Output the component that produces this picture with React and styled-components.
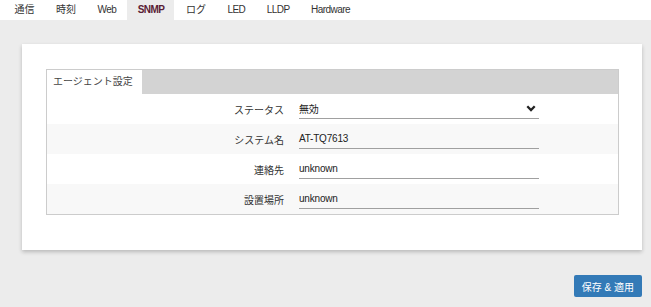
import React from "react";
import styled, { createGlobalStyle } from "styled-components";

const GlobalStyle = createGlobalStyle`
  body {
    margin: 0;
    background: #ececec;
    font-family: "Liberation Sans", "Noto Sans CJK JP", sans-serif;
    font-size: 10px;
    color: #333;
  }
`;

// Top navigation
const TabBar = styled.nav`
  display: flex;
  gap: 1px;
  height: 20px;
  padding-left: 4px;
  background: #fff;
`;

const Tab = styled.div`
  padding: 0 10px 0 10.5px;
  line-height: 20px;
  font-size: 10px;
  letter-spacing: ${(p) => (p.$latin ? "-0.55px" : "0")};
  color: ${(p) => (p.$active ? "#5a1d35" : "#333")};
  font-weight: ${(p) => (p.$active ? 700 : 400)};
  background: ${(p) => (p.$active ? "#ececec" : "transparent")};
`;

const Main = styled.main`
  padding: 24px 9px 0 22px;
`;

const Card = styled.section`
  background: #fff;
  padding: 25px 23px 35px 24px;
  box-shadow: 0 2px 4px rgba(0, 0, 0, 0.22);
`;

const Fieldset = styled.div`
  border: 1px solid #cccccc;
`;

const FieldsetHeader = styled.div`
  display: flex;
  height: 24px;
  background: #d3d3d3;
`;

const HeaderTab = styled.div`
  width: 95px;
  padding-left: 6px;
  box-sizing: border-box;
  background: #fff;
  line-height: 24px;
  color: #444;
`;

const Row = styled.div`
  display: flex;
  align-items: center;
  gap: 15px;
  height: 30px;
  background: ${(p) => (p.$alt ? "#f8f8f8" : "#fff")};
`;

const Label = styled.div`
  width: 237px;
  text-align: right;
  color: #333;
`;

const Field = styled.div`
  display: flex;
  align-items: center;
  justify-content: space-between;
  width: 240px;
  height: 19px;
  padding: 0 3px 0 0;
  box-sizing: border-box;
  border-bottom: 1px solid #a0a0a0;
  color: #222;
  letter-spacing: -0.2px;
`;

const Footer = styled.div`
  display: flex;
  justify-content: flex-end;
  padding-top: 25px;
`;

const SaveButton = styled.button`
  height: 22px;
  padding: 0 8px;
  border: none;
  border-radius: 2px;
  background: #337ab7;
  color: #fff;
  font-family: inherit;
  font-size: 10px;
`;

const tabs = [
  { label: "通信" },
  { label: "時刻" },
  { label: "Web", latin: true },
  { label: "SNMP", latin: true },
  { label: "ログ" },
  { label: "LED", latin: true },
  { label: "LLDP", latin: true },
  { label: "Hardware", latin: true },
];

const Chevron = () => (
  <svg width="10" height="7" viewBox="0 0 10 7">
    <polyline points="1.3,1.3 5,5 8.7,1.3" fill="none" stroke="#222" strokeWidth="2.3" />
  </svg>
);

export default function App() {
  return (
    <>
      <GlobalStyle />
      <TabBar>
        {tabs.map((t) => (
          <Tab key={t.label} $latin={t.latin} $active={t.label === "SNMP"}>
            {t.label}
          </Tab>
        ))}
      </TabBar>
      <Main>
        <Card>
          <Fieldset>
            <FieldsetHeader>
              <HeaderTab>エージェント設定</HeaderTab>
            </FieldsetHeader>
            <Row>
              <Label>ステータス</Label>
              <Field>
                <span>無効</span>
                <Chevron />
              </Field>
            </Row>
            <Row $alt>
              <Label>システム名</Label>
              <Field>AT-TQ7613</Field>
            </Row>
            <Row>
              <Label>連絡先</Label>
              <Field>unknown</Field>
            </Row>
            <Row $alt>
              <Label>設置場所</Label>
              <Field>unknown</Field>
            </Row>
          </Fieldset>
        </Card>
        <Footer>
          <SaveButton>保存 &amp; 適用</SaveButton>
        </Footer>
      </Main>
    </>
  );
}
